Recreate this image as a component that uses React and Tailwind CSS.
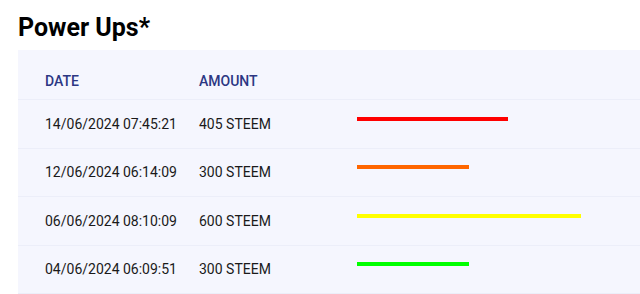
export default function App() {
  const rows = [
    { date: "14/06/2024 07:45:21", amount: "405 STEEM", w: 150.5, c: "bg-[#ff0000]" },
    { date: "12/06/2024 06:14:09", amount: "300 STEEM", w: 111.5, c: "bg-[#ff6600]" },
    { date: "06/06/2024 08:10:09", amount: "600 STEEM", w: 223.5, c: "bg-[#ffff00]" },
    { date: "04/06/2024 06:09:51", amount: "300 STEEM", w: 111.5, c: "bg-[#00ff00]" },
  ];
  return (
    <div className="w-[640px] h-[294px] overflow-hidden bg-white font-['Roboto',sans-serif]">
      <h1 className="pl-[18px] pt-[12px] text-[25px] leading-[32px] font-bold text-black">Power Ups*</h1>
      <div className="ml-[18px] mt-[6px] bg-[#f5f6fe] w-[640px]">
        <div className="flex h-[50px] pt-[21px] border-b border-[#eceef9] text-[14px] leading-[20px] font-medium text-[#2c3783]">
          <div className="w-[181px] pl-[27px]">DATE</div>
          <div className="w-[158px]">AMOUNT</div>
        </div>
        {rows.map((r) => (
          <div key={r.date} className="flex items-center h-[48.5px] border-b border-[#eceef9] text-[14px] leading-[20px] text-[#1a1a1a]">
            <div className="w-[181px] pl-[27px]">{r.date}</div>
            <div className="w-[158px]">{r.amount}</div>
            <div className="flex-1 flex items-center">
              <div className={`h-[4px] mb-[10px] ${r.c}`} style={{ width: r.w }} />
            </div>
          </div>
        ))}
      </div>
    </div>
  );
}
